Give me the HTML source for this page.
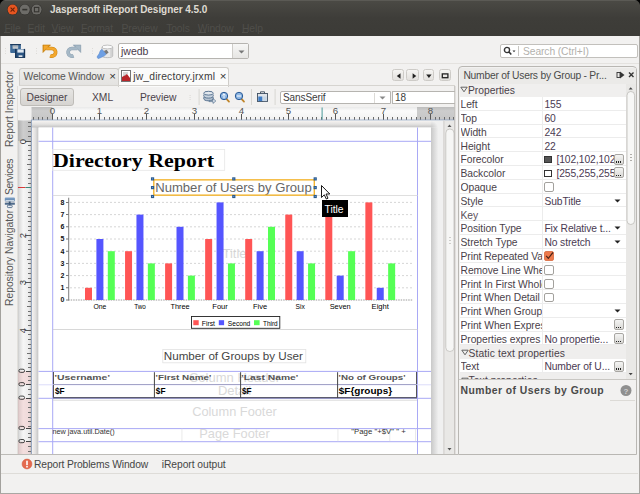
<!DOCTYPE html>
<html><head><meta charset="utf-8">
<style>
*{box-sizing:border-box;margin:0;padding:0}
html,body{width:640px;height:494px;overflow:hidden;background:#f2f1f0;font-family:"Liberation Sans",sans-serif;position:relative}
.a{position:absolute}
.t{position:absolute;white-space:nowrap;line-height:1}
svg{position:absolute;overflow:visible}
</style></head><body>

<div class="a" style="left:0px;top:0px;width:640px;height:36px;background:linear-gradient(#4b4a45,#3e3d39 18px,#3c3b37);"></div>
<div class="a" style="left:0px;top:0px;width:640px;height:1px;background:#5b5a55;"></div>
<svg style="left:634px;top:0" width="6" height="6"><path d="M6 0 H1 Q5.2 0.8 6 5 Z" fill="#000"/></svg>
<svg style="left:0;top:0" width="60" height="20" viewBox="0 0 60 20"><path d="M0 0 H5 Q0.8 0.8 0 5 Z" fill="#000"/><circle cx="12.6" cy="9.6" r="5.6" fill="#2f2e2b"/><circle cx="12.6" cy="9.6" r="5" fill="#e65520"/><path d="M10.6 7.6 L14.6 11.6 M14.6 7.6 L10.6 11.6" stroke="#6b2208" stroke-width="1.1"/><circle cx="24.8" cy="9.6" r="5.6" fill="#2f2e2b"/><circle cx="24.8" cy="9.6" r="5" fill="#6d6c68"/><rect x="22.3" y="8.8" width="5" height="1.6" fill="#34332f"/><circle cx="36.6" cy="9.6" r="5.6" fill="#2f2e2b"/><circle cx="36.6" cy="9.6" r="5" fill="#6d6c68"/><rect x="34.4" y="7.4" width="4.4" height="4.4" fill="none" stroke="#34332f" stroke-width="1.1"/></svg>
<div class="t" style="left:50px;top:5px;font-size:10px;color:#dfdbd2;font-weight:bold;letter-spacing:-0.05px;">Jaspersoft iReport Designer 4.5.0</div>
<div class="t" style="left:4.4px;top:23.5px;font-size:10.3px;color:#4f4e4a;font-weight:normal;letter-spacing:-0.1px;">File</div>
<div class="a" style="left:4.4px;top:32px;width:6px;height:1px;background:#4f4e4a;"></div>
<div class="t" style="left:27.6px;top:23.5px;font-size:10.3px;color:#4f4e4a;font-weight:normal;letter-spacing:-0.1px;">Edit</div>
<div class="a" style="left:27.6px;top:32px;width:6px;height:1px;background:#4f4e4a;"></div>
<div class="t" style="left:51.6px;top:23.5px;font-size:10.3px;color:#4f4e4a;font-weight:normal;letter-spacing:-0.1px;">View</div>
<div class="a" style="left:51.6px;top:32px;width:6px;height:1px;background:#4f4e4a;"></div>
<div class="t" style="left:81px;top:23.5px;font-size:10.3px;color:#4f4e4a;font-weight:normal;letter-spacing:-0.1px;">Format</div>
<div class="a" style="left:81px;top:32px;width:6px;height:1px;background:#4f4e4a;"></div>
<div class="t" style="left:121.6px;top:23.5px;font-size:10.3px;color:#4f4e4a;font-weight:normal;letter-spacing:-0.1px;">Preview</div>
<div class="a" style="left:121.6px;top:32px;width:6px;height:1px;background:#4f4e4a;"></div>
<div class="t" style="left:166.2px;top:23.5px;font-size:10.3px;color:#4f4e4a;font-weight:normal;letter-spacing:-0.1px;">Tools</div>
<div class="a" style="left:166.2px;top:32px;width:6px;height:1px;background:#4f4e4a;"></div>
<div class="t" style="left:197.7px;top:23.5px;font-size:10.3px;color:#4f4e4a;font-weight:normal;letter-spacing:-0.1px;">Window</div>
<div class="a" style="left:197.7px;top:32px;width:8px;height:1px;background:#4f4e4a;"></div>
<div class="t" style="left:242px;top:23.5px;font-size:10.3px;color:#4f4e4a;font-weight:normal;letter-spacing:-0.1px;">Help</div>
<div class="a" style="left:242px;top:32px;width:6px;height:1px;background:#4f4e4a;"></div>
<div class="a" style="left:0px;top:36px;width:1px;height:458px;background:#a3a19d;"></div>
<div class="a" style="left:1px;top:63px;width:639px;height:1px;background:#e4e2df;"></div>
<svg style="left:0;top:36px" width="130" height="28" viewBox="0 36 130 28">
  <g fill="#dddbd7"><rect x="5" y="48" width="1" height="1"/><rect x="5" y="50.5" width="1" height="1"/><rect x="5" y="53" width="1" height="1"/>
  <rect x="36" y="48" width="1" height="1"/><rect x="36" y="50.5" width="1" height="1"/><rect x="36" y="53" width="1" height="1"/>
  <rect x="92" y="48" width="1" height="1"/><rect x="92" y="50.5" width="1" height="1"/><rect x="92" y="53" width="1" height="1"/></g>
  <rect x="10.2" y="44" width="10.7" height="9" rx="1" fill="#3d6a98"/>
  <rect x="10.2" y="44" width="10.7" height="1.2" fill="#1b3a5e"/>
  <rect x="12.6" y="45.5" width="5.6" height="3.3" fill="#c2c8ce"/>
  <rect x="12.6" y="45.5" width="5.6" height="1" fill="#9aa3ab"/>
  <rect x="15.1" y="48.9" width="10" height="8.9" rx="1" fill="#2b5583"/>
  <rect x="15.1" y="48.9" width="1.2" height="8.9" fill="#173456"/>
  <rect x="23.9" y="48.9" width="1.2" height="8.9" fill="#173456"/>
  <rect x="15.1" y="56.8" width="10" height="1" fill="#173456"/>
  <rect x="17.4" y="49.4" width="6.3" height="3.2" fill="#dfe8f1"/>
  <rect x="18.6" y="55.4" width="3.8" height="1.5" fill="#f2f4f6"/>
  <g>
  <path d="M46.3 48.5 L51.8 48.5 A3.8 3.8 0 1 1 50.2 55.74" fill="none" stroke="#c9820f" stroke-width="3.7"/>
  <path d="M42.9 44.9 L50.6 44.9 L42.9 52.6 Z" fill="#c9820f" stroke="#c9820f" stroke-width="0.5" stroke-linejoin="round"/>
  <path d="M46.3 48.5 L51.8 48.5 A3.8 3.8 0 1 1 50.2 55.74" fill="none" stroke="#f4a82e" stroke-width="2.6"/>
  <path d="M43.6 45.6 L49 45.6 L43.6 51 Z" fill="#f4a82e"/>
  </g>
  <g>
  <path d="M77.4 48.5 L71.9 48.5 A3.8 3.8 0 1 0 73.5 55.74" fill="none" stroke="#8fa3b3" stroke-width="3.7"/>
  <path d="M80.8 44.9 L73.1 44.9 L80.8 52.6 Z" fill="#8fa3b3" stroke="#8fa3b3" stroke-width="0.5" stroke-linejoin="round"/>
  <path d="M77.4 48.5 L71.9 48.5 A3.8 3.8 0 1 0 73.5 55.74" fill="none" stroke="#a6b8c6" stroke-width="2.6"/>
  <path d="M80.1 45.6 L74.7 45.6 L80.1 51 Z" fill="#a6b8c6"/>
  </g>
  <path d="M102 47 L102 56 C102 58.2 112.7 58.2 112.7 56 L112.7 47 Z" fill="#e9e9e9" stroke="#a9a9a9" stroke-width="0.7"/>
  <path d="M110.2 48.5 L110.2 56.8 C111.3 56.6 112 56.3 112 56 L112 48Z" fill="#d2d2d2"/>
  <ellipse cx="107.35" cy="47" rx="5.35" ry="1.9" fill="#fbfbfb" stroke="#a9a9a9" stroke-width="0.7"/>
  <path d="M97 57 C97.5 55.5 98.6 55 99.2 53.6 C99.8 51.6 100.5 49.8 101.8 49.4 L106.6 53.6 C105.8 55.2 104 56.4 102 57 C100.6 57.6 99.4 58.4 98 58.6 Z" fill="#6e9fe3" stroke="#4f80c8" stroke-width="0.5"/>
  <path d="M103.8 51 L106.6 49.8 L108.6 52.6 L106.4 54.2 Z" fill="#7a7a7a"/>
</svg>
<div class="a" style="left:118px;top:43px;width:131px;height:16px;background:#fff;border:1px solid #b6b4b0;border-radius:2px"></div>
<div class="a" style="left:233px;top:44px;width:15px;height:14px;background:linear-gradient(#f7f7f6,#e6e5e3);"></div>
<div class="a" style="left:232px;top:44px;width:1px;height:14px;background:#cfcdc9;"></div>
<div class="t" style="left:121px;top:46px;font-size:10.5px;color:#4a3a4a;font-weight:normal;letter-spacing:0px;">jwedb</div>
<svg style="left:237.7px;top:49.5px" width="7" height="4"><path d="M0.5 0.5 H6.5 L3.5 3.5Z" fill="#777"/></svg>
<div class="a" style="left:500px;top:44px;width:138px;height:14px;background:#fff;border:1px solid #c2c0bc;border-radius:2px"></div>
<svg style="left:503px;top:46px" width="14" height="10"><circle cx="4" cy="4" r="2.6" fill="none" stroke="#333" stroke-width="1.4"/><path d="M6 6 L8.3 8.5" stroke="#333" stroke-width="1.6"/><path d="M9.5 4.5 H12.5 L11 6.2Z" fill="#333"/></svg>
<div class="a" style="left:518px;top:46px;width:1px;height:10px;background:#c8c6c2;"></div>
<div class="t" style="left:523px;top:46.5px;font-size:10.3px;color:#b3b1ad;font-weight:normal;letter-spacing:-0.1px;">Search (Ctrl+I)</div>
<div class="a" style="left:17.3px;top:86px;width:0.8px;height:369px;background:#e2e0dc;"></div>
<div class="t" style="left:9.9px;top:146.5px;font-size:10.3px;color:#575757;transform-origin:0 0;transform:rotate(-90deg) translate(0,-5.5px)">Report Inspector</div>
<div class="t" style="left:9.9px;top:195.3px;font-size:10.3px;color:#575757;letter-spacing:-0.45px;transform-origin:0 0;transform:rotate(-90deg) translate(0,-5.5px)">Services</div>
<div class="t" style="left:9.9px;top:305.8px;font-size:10.3px;color:#575757;transform-origin:0 0;transform:rotate(-90deg) translate(0,-5.5px)">Repository Navigator</div>
<svg style="left:0;top:190px" width="20" height="20" viewBox="0 190 20 20"><defs><linearGradient id="svg1" x1="0" y1="0" x2="0" y2="1"><stop offset="0" stop-color="#7fa2c8"/><stop offset="1" stop-color="#5b7fa8"/></linearGradient></defs><rect x="4.8" y="197.6" width="10.1" height="3.9" rx="0.8" fill="url(#svg1)"/><rect x="5.5" y="200" width="8.7" height="0.9" fill="#d5e0ea"/><rect x="4.8" y="201.6" width="10.1" height="1.1" fill="#c5c9cd"/><rect x="4.8" y="202.8" width="10.1" height="2" rx="0.6" fill="#4f6b8b"/><rect x="8.8" y="201.5" width="1.8" height="4" fill="#3d5674"/><rect x="7.4" y="205.2" width="4.8" height="2.4" rx="0.8" fill="#e8ecf0" stroke="#4f6b8b" stroke-width="0.9"/></svg>
<div class="a" style="left:19px;top:68px;width:100px;height:18px;background:linear-gradient(#eeedeb,#e3e2e0);border:1px solid #cfcdc9;border-bottom:none;border-radius:3px 3px 0 0"></div>
<div class="t" style="left:23.5px;top:71.5px;font-size:10.3px;color:#555555;font-weight:normal;letter-spacing:-0.1px;">Welcome Window</div>
<div class="t" style="left:109.3px;top:70.8px;font-size:11.5px;color:#333;font-weight:normal;letter-spacing:0px;">×</div>
<div class="a" style="left:118px;top:67px;width:111px;height:20px;background:#fbfbfa;border:1px solid #cfcdc9;border-bottom:none;border-radius:3px 3px 0 0"></div>
<svg style="left:120px;top:69px" width="12" height="14"><rect x="1.5" y="1.5" width="9" height="11" fill="#fff" stroke="#666" stroke-width="0.9"/><path d="M2 12 L2 8 L7 5 L10 9 L10 12Z" fill="#b8262a"/><path d="M3 4 H8 M3 6 H6" stroke="#999" stroke-width="0.8"/></svg>
<div class="t" style="left:133.3px;top:71.5px;font-size:10.3px;color:#3c3c3c;font-weight:normal;letter-spacing:0.17px;">jw_directory.jrxml</div>
<div class="t" style="left:219.8px;top:70.8px;font-size:11.5px;color:#333;font-weight:normal;letter-spacing:0px;">×</div>
<div class="a" style="left:392.3px;top:69px;width:11.8px;height:12.4px;background:linear-gradient(#f6f5f3,#e2e0dd);border:1px solid #cdcbc7;border-radius:2.5px"></div>
<div class="a" style="left:406.4px;top:69px;width:12.3px;height:12.4px;background:linear-gradient(#f6f5f3,#e2e0dd);border:1px solid #cdcbc7;border-radius:2.5px"></div>
<div class="a" style="left:423.2px;top:69px;width:11.3px;height:12.4px;background:linear-gradient(#f6f5f3,#e2e0dd);border:1px solid #cdcbc7;border-radius:2.5px"></div>
<div class="a" style="left:438.8px;top:69px;width:12.6px;height:12.4px;background:linear-gradient(#f6f5f3,#e2e0dd);border:1px solid #cdcbc7;border-radius:2.5px"></div>
<svg style="left:390px;top:68px" width="66" height="16"><path d="M10.5 5.2 L10.5 10.8 L6.8 8Z" fill="#222"/><path d="M22.6 5.2 L22.6 10.8 L26.3 8Z" fill="#222"/><path d="M36.2 6.4 H41.6 L38.9 10Z" fill="#222"/><rect x="52.3" y="5.9" width="5.6" height="3.8" fill="none" stroke="#222" stroke-width="1.3"/></svg>
<div class="a" style="left:19px;top:85.4px;width:436px;height:1px;background:#d6d4d0;"></div>
<div class="a" style="left:20px;top:87.5px;width:54px;height:18.5px;background:linear-gradient(#e6e5e3,#d6d4d1);border:1px solid #bebcb8;border-radius:3px"></div>
<div class="t" style="left:26.5px;top:92.5px;font-size:10.3px;color:#4a3f4a;font-weight:normal;letter-spacing:-0.05px;">Designer</div>
<div class="t" style="left:92px;top:92.5px;font-size:10.3px;color:#4a3f4a;font-weight:normal;letter-spacing:0px;">XML</div>
<div class="t" style="left:140px;top:92.5px;font-size:10.3px;color:#4a3f4a;font-weight:normal;letter-spacing:-0.05px;">Preview</div>
<svg style="left:185px;top:87px" width="100" height="20" viewBox="185 87 100 20">
  <g fill="#dedcd8"><rect x="189.5" y="95" width="1.2" height="1"/><rect x="189.5" y="97" width="1.2" height="1"/><rect x="189.5" y="99" width="1.2" height="1"/></g>
  <rect x="198.6" y="89" width="1" height="16" fill="#d8d6d2"/>
  <rect x="251" y="89" width="1" height="16" fill="#d8d6d2"/>
  <rect x="274.6" y="89" width="1" height="16" fill="#d8d6d2"/>
  <ellipse cx="208.5" cy="98.2" rx="4.8" ry="2.6" fill="#b7c4d2" stroke="#4f6b8a" stroke-width="0.9"/>
  <ellipse cx="208.5" cy="95.5" rx="4.8" ry="2.6" fill="#c9d4df" stroke="#4f6b8a" stroke-width="0.9"/>
  <ellipse cx="208.5" cy="93.2" rx="4.8" ry="1.9" fill="#e2e8ee" stroke="#4f6b8a" stroke-width="0.9"/>
  <path d="M209 100.4 H213 V98.6 L215.8 101 L213 103.4 V101.6 H209Z" fill="#dfe6ee" stroke="#4f6b8a" stroke-width="0.7"/>
  <path d="M226 98.4 L229 101.6" stroke="#c0852a" stroke-width="1.8" stroke-linecap="round"/>
  <circle cx="224" cy="96" r="3.7" fill="#8db6e3" stroke="#2a5a96" stroke-width="1"/>
  <path d="M224 93.8 V98.2 M222.4 95.4 L224 93.8 L225.6 95.4" stroke="#fff" stroke-width="0.9" fill="none"/>
  <path d="M241 98.4 L244 101.6" stroke="#c0852a" stroke-width="1.8" stroke-linecap="round"/>
  <circle cx="239" cy="96" r="3.7" fill="#8db6e3" stroke="#2a5a96" stroke-width="1"/>
  <path d="M237 96 H241" stroke="#fff" stroke-width="1"/>
  <rect x="257.5" y="93.5" width="10" height="8" fill="#dfe4ea" stroke="#3f4f60" stroke-width="0.9"/>
  <path d="M260.5 93.5 V91.8 H264.5 V93.5" fill="none" stroke="#3f4f60" stroke-width="0.9"/>
  <rect x="258.3" y="96.5" width="4" height="4.6" fill="#3d7cc6"/>
  <rect x="263.2" y="96.5" width="3.6" height="4.6" fill="#c8d6e4"/>
</svg>
<div class="a" style="left:280px;top:91.2px;width:111px;height:12.6px;background:#fff;border:1px solid #b6b4b0;border-radius:2px 0 0 2px"></div>
<div class="a" style="left:374px;top:92.5px;width:1px;height:10.5px;background:#dcdad6;"></div>
<div class="t" style="left:283px;top:93px;font-size:10px;color:#3c3c3c;font-weight:normal;letter-spacing:-0.1px;">SansSerif</div>
<svg style="left:379px;top:96px" width="7" height="4"><path d="M0.5 0.5 H6.5 L3.5 3.5Z" fill="#8a8a8a"/></svg>
<div class="a" style="left:392px;top:91.2px;width:63px;height:12.6px;background:#fff;border:1px solid #b6b4b0;border-right:none"></div>
<div class="t" style="left:395px;top:93px;font-size:10px;color:#3c3c3c;font-weight:normal;letter-spacing:0px;">18</div>
<svg style="left:0;top:0" width="640" height="494" viewBox="0 0 640 494">
<defs>
<linearGradient id="rh" x1="0" y1="0" x2="0" y2="1"><stop offset="0" stop-color="#e9e9e9"/><stop offset="0.3" stop-color="#fbfbfb"/><stop offset="1" stop-color="#f1f1f1"/></linearGradient>
<linearGradient id="rhg" x1="0" y1="0" x2="0" y2="1"><stop offset="0" stop-color="#bdbdbd"/><stop offset="0.3" stop-color="#cdcdcd"/><stop offset="1" stop-color="#c6c6c6"/></linearGradient>
<linearGradient id="rv" x1="0" y1="0" x2="1" y2="0"><stop offset="0" stop-color="#cbcbcb"/><stop offset="0.12" stop-color="#dedede"/><stop offset="0.4" stop-color="#f6f6f6"/><stop offset="0.8" stop-color="#ededed"/><stop offset="1" stop-color="#d9d9d9"/></linearGradient>
<linearGradient id="rvg" x1="0" y1="0" x2="1" y2="0"><stop offset="0" stop-color="#b0b0b0"/><stop offset="0.4" stop-color="#cdcdcd"/><stop offset="1" stop-color="#c2c2c2"/></linearGradient>
<linearGradient id="rvp" x1="0" y1="0" x2="1" y2="0"><stop offset="0" stop-color="#d2bfbf"/><stop offset="0.12" stop-color="#e3cfcf"/><stop offset="0.4" stop-color="#f3dede"/><stop offset="0.8" stop-color="#efdada"/><stop offset="1" stop-color="#dccaca"/></linearGradient>
<linearGradient id="shl" x1="0" y1="0" x2="1" y2="0"><stop offset="0" stop-color="#f5f2f0"/><stop offset="0.5" stop-color="#e3e2e1"/><stop offset="1" stop-color="#c2c2c2"/></linearGradient>
<linearGradient id="sht" x1="0" y1="0" x2="0" y2="1"><stop offset="0" stop-color="#f5f2f0"/><stop offset="0.5" stop-color="#e3e2e1"/><stop offset="1" stop-color="#c2c2c2"/></linearGradient>
<linearGradient id="shr" x1="0" y1="0" x2="1" y2="0"><stop offset="0" stop-color="#c8c8c8"/><stop offset="1" stop-color="#eeeeee"/></linearGradient>
<radialGradient id="shc" cx="0" cy="1" r="1"><stop offset="0" stop-color="#c6c6c6"/><stop offset="1" stop-color="#f0f0f0"/></radialGradient>
</defs>
<rect x="31.5" y="107" width="423" height="13" fill="url(#rh)"/>
<rect x="31.5" y="107" width="20.80" height="13" fill="url(#rhg)"/>
<rect x="417.0" y="107" width="37.50" height="13" fill="url(#rhg)"/>
<rect x="33" y="117" width="1" height="3" fill="#6a6a6a"/>
<rect x="38" y="117" width="1" height="3" fill="#6a6a6a"/>
<rect x="42" y="117" width="1" height="3" fill="#6a6a6a"/>
<rect x="47" y="117" width="1" height="3" fill="#6a6a6a"/>
<rect x="52" y="114" width="1" height="6" fill="#555"/>
<text x="52.5" y="113.9" font-size="9.7" text-anchor="middle" fill="#555" font-family="Liberation Sans">0</text>
<rect x="57" y="117" width="1" height="3" fill="#6a6a6a"/>
<rect x="61" y="117" width="1" height="3" fill="#6a6a6a"/>
<rect x="66" y="117" width="1" height="3" fill="#6a6a6a"/>
<rect x="71" y="117" width="1" height="3" fill="#6a6a6a"/>
<rect x="75" y="117" width="1" height="3" fill="#6a6a6a"/>
<rect x="80" y="117" width="1" height="3" fill="#6a6a6a"/>
<rect x="85" y="117" width="1" height="3" fill="#6a6a6a"/>
<rect x="90" y="117" width="1" height="3" fill="#6a6a6a"/>
<rect x="94" y="117" width="1" height="3" fill="#6a6a6a"/>
<rect x="99" y="114" width="1" height="6" fill="#555"/>
<text x="99.5" y="113.9" font-size="9.7" text-anchor="middle" fill="#555" font-family="Liberation Sans">1</text>
<rect x="104" y="117" width="1" height="3" fill="#6a6a6a"/>
<rect x="109" y="117" width="1" height="3" fill="#6a6a6a"/>
<rect x="113" y="117" width="1" height="3" fill="#6a6a6a"/>
<rect x="118" y="117" width="1" height="3" fill="#6a6a6a"/>
<rect x="123" y="117" width="1" height="3" fill="#6a6a6a"/>
<rect x="127" y="117" width="1" height="3" fill="#6a6a6a"/>
<rect x="132" y="117" width="1" height="3" fill="#6a6a6a"/>
<rect x="137" y="117" width="1" height="3" fill="#6a6a6a"/>
<rect x="142" y="117" width="1" height="3" fill="#6a6a6a"/>
<rect x="146" y="114" width="1" height="6" fill="#555"/>
<text x="146.5" y="113.9" font-size="9.7" text-anchor="middle" fill="#555" font-family="Liberation Sans">2</text>
<rect x="151" y="117" width="1" height="3" fill="#6a6a6a"/>
<rect x="156" y="117" width="1" height="3" fill="#6a6a6a"/>
<rect x="160" y="117" width="1" height="3" fill="#6a6a6a"/>
<rect x="165" y="117" width="1" height="3" fill="#6a6a6a"/>
<rect x="170" y="117" width="1" height="3" fill="#6a6a6a"/>
<rect x="175" y="117" width="1" height="3" fill="#6a6a6a"/>
<rect x="179" y="117" width="1" height="3" fill="#6a6a6a"/>
<rect x="184" y="117" width="1" height="3" fill="#6a6a6a"/>
<rect x="189" y="117" width="1" height="3" fill="#6a6a6a"/>
<rect x="194" y="114" width="1" height="6" fill="#555"/>
<text x="194.5" y="113.9" font-size="9.7" text-anchor="middle" fill="#555" font-family="Liberation Sans">3</text>
<rect x="198" y="117" width="1" height="3" fill="#6a6a6a"/>
<rect x="203" y="117" width="1" height="3" fill="#6a6a6a"/>
<rect x="208" y="117" width="1" height="3" fill="#6a6a6a"/>
<rect x="212" y="117" width="1" height="3" fill="#6a6a6a"/>
<rect x="217" y="117" width="1" height="3" fill="#6a6a6a"/>
<rect x="222" y="117" width="1" height="3" fill="#6a6a6a"/>
<rect x="227" y="117" width="1" height="3" fill="#6a6a6a"/>
<rect x="231" y="117" width="1" height="3" fill="#6a6a6a"/>
<rect x="236" y="117" width="1" height="3" fill="#6a6a6a"/>
<rect x="241" y="114" width="1" height="6" fill="#555"/>
<text x="241.5" y="113.9" font-size="9.7" text-anchor="middle" fill="#555" font-family="Liberation Sans">4</text>
<rect x="246" y="117" width="1" height="3" fill="#6a6a6a"/>
<rect x="250" y="117" width="1" height="3" fill="#6a6a6a"/>
<rect x="255" y="117" width="1" height="3" fill="#6a6a6a"/>
<rect x="260" y="117" width="1" height="3" fill="#6a6a6a"/>
<rect x="264" y="117" width="1" height="3" fill="#6a6a6a"/>
<rect x="269" y="117" width="1" height="3" fill="#6a6a6a"/>
<rect x="274" y="117" width="1" height="3" fill="#6a6a6a"/>
<rect x="279" y="117" width="1" height="3" fill="#6a6a6a"/>
<rect x="283" y="117" width="1" height="3" fill="#6a6a6a"/>
<rect x="288" y="114" width="1" height="6" fill="#555"/>
<text x="288.5" y="113.9" font-size="9.7" text-anchor="middle" fill="#555" font-family="Liberation Sans">5</text>
<rect x="293" y="117" width="1" height="3" fill="#6a6a6a"/>
<rect x="298" y="117" width="1" height="3" fill="#6a6a6a"/>
<rect x="302" y="117" width="1" height="3" fill="#6a6a6a"/>
<rect x="307" y="117" width="1" height="3" fill="#6a6a6a"/>
<rect x="312" y="117" width="1" height="3" fill="#6a6a6a"/>
<rect x="316" y="117" width="1" height="3" fill="#6a6a6a"/>
<rect x="321" y="117" width="1" height="3" fill="#6a6a6a"/>
<rect x="326" y="117" width="1" height="3" fill="#6a6a6a"/>
<rect x="331" y="117" width="1" height="3" fill="#6a6a6a"/>
<rect x="335" y="114" width="1" height="6" fill="#555"/>
<text x="335.5" y="113.9" font-size="9.7" text-anchor="middle" fill="#555" font-family="Liberation Sans">6</text>
<rect x="340" y="117" width="1" height="3" fill="#6a6a6a"/>
<rect x="345" y="117" width="1" height="3" fill="#6a6a6a"/>
<rect x="349" y="117" width="1" height="3" fill="#6a6a6a"/>
<rect x="354" y="117" width="1" height="3" fill="#6a6a6a"/>
<rect x="359" y="117" width="1" height="3" fill="#6a6a6a"/>
<rect x="364" y="117" width="1" height="3" fill="#6a6a6a"/>
<rect x="368" y="117" width="1" height="3" fill="#6a6a6a"/>
<rect x="373" y="117" width="1" height="3" fill="#6a6a6a"/>
<rect x="378" y="117" width="1" height="3" fill="#6a6a6a"/>
<rect x="383" y="114" width="1" height="6" fill="#555"/>
<text x="383.5" y="113.9" font-size="9.7" text-anchor="middle" fill="#555" font-family="Liberation Sans">7</text>
<rect x="387" y="117" width="1" height="3" fill="#6a6a6a"/>
<rect x="392" y="117" width="1" height="3" fill="#6a6a6a"/>
<rect x="397" y="117" width="1" height="3" fill="#6a6a6a"/>
<rect x="401" y="117" width="1" height="3" fill="#6a6a6a"/>
<rect x="406" y="117" width="1" height="3" fill="#6a6a6a"/>
<rect x="411" y="117" width="1" height="3" fill="#6a6a6a"/>
<rect x="416" y="117" width="1" height="3" fill="#6a6a6a"/>
<rect x="420" y="117" width="1" height="3" fill="#6a6a6a"/>
<rect x="425" y="117" width="1" height="3" fill="#6a6a6a"/>
<rect x="430" y="114" width="1" height="6" fill="#555"/>
<text x="430.5" y="113.9" font-size="9.7" text-anchor="middle" fill="#555" font-family="Liberation Sans">8</text>
<rect x="435" y="117" width="1" height="3" fill="#6a6a6a"/>
<rect x="439" y="117" width="1" height="3" fill="#6a6a6a"/>
<rect x="444" y="117" width="1" height="3" fill="#6a6a6a"/>
<rect x="449" y="117" width="1" height="3" fill="#6a6a6a"/>
<rect x="453" y="117" width="1" height="3" fill="#6a6a6a"/>
<rect x="321.6" y="107.5" width="1" height="12.5" fill="#4a9a9a"/>
<rect x="31" y="119.6" width="424" height="1" fill="#8ea3c2"/>
<rect x="31.5" y="120.5" width="413" height="334" fill="#f0f0f0"/>
<rect x="32" y="121" width="6.5" height="334" fill="url(#shl)"/>
<rect x="32" y="121" width="399" height="6.5" fill="url(#sht)"/>
<rect x="431" y="127.5" width="7" height="327" fill="url(#shr)"/>
<rect x="431" y="121" width="7" height="6.5" fill="url(#shc)"/>
<rect x="31" y="120" width="1" height="335" fill="#8ea3c2"/>
<rect x="38.5" y="127.5" width="392.5" height="327" fill="#ffffff"/>
<rect x="18" y="120.5" width="13" height="334" fill="url(#rv)"/>
<rect x="18" y="120.5" width="13" height="20.5" fill="url(#rvg)"/>
<rect x="18" y="371.3" width="13" height="13.40" fill="url(#rvp)"/>
<rect x="18" y="398.2" width="13" height="30.30" fill="url(#rvp)"/>
<rect x="18" y="441.6" width="13" height="13.40" fill="url(#rvp)"/>
<rect x="30.6" y="120.5" width="0.6" height="334" fill="#b8b8b8"/>
<rect x="28" y="122" width="3" height="1" fill="#707070"/>
<rect x="28" y="126" width="3" height="1" fill="#707070"/>
<rect x="28" y="131" width="3" height="1" fill="#707070"/>
<rect x="28" y="136" width="3" height="1" fill="#707070"/>
<rect x="25" y="141" width="6" height="1" fill="#555"/>
<text transform="translate(26,141.5) rotate(-90)" font-size="9.5" text-anchor="middle" fill="#444" font-family="Liberation Sans">0</text>
<rect x="28" y="145" width="3" height="1" fill="#707070"/>
<rect x="28" y="150" width="3" height="1" fill="#707070"/>
<rect x="28" y="155" width="3" height="1" fill="#707070"/>
<rect x="28" y="159" width="3" height="1" fill="#707070"/>
<rect x="27" y="164" width="4" height="1" fill="#707070"/>
<rect x="28" y="169" width="3" height="1" fill="#707070"/>
<rect x="28" y="174" width="3" height="1" fill="#707070"/>
<rect x="28" y="178" width="3" height="1" fill="#707070"/>
<rect x="28" y="183" width="3" height="1" fill="#707070"/>
<rect x="28" y="192" width="3" height="1" fill="#707070"/>
<rect x="28" y="197" width="3" height="1" fill="#707070"/>
<rect x="28" y="202" width="3" height="1" fill="#707070"/>
<rect x="28" y="207" width="3" height="1" fill="#707070"/>
<rect x="27" y="211" width="4" height="1" fill="#707070"/>
<rect x="28" y="216" width="3" height="1" fill="#707070"/>
<rect x="28" y="221" width="3" height="1" fill="#707070"/>
<rect x="28" y="226" width="3" height="1" fill="#707070"/>
<rect x="28" y="230" width="3" height="1" fill="#707070"/>
<rect x="25" y="235" width="6" height="1" fill="#555"/>
<text transform="translate(26,235.5) rotate(-90)" font-size="9.5" text-anchor="middle" fill="#444" font-family="Liberation Sans">2</text>
<rect x="28" y="240" width="3" height="1" fill="#707070"/>
<rect x="28" y="244" width="3" height="1" fill="#707070"/>
<rect x="28" y="249" width="3" height="1" fill="#707070"/>
<rect x="28" y="254" width="3" height="1" fill="#707070"/>
<rect x="27" y="259" width="4" height="1" fill="#707070"/>
<rect x="28" y="263" width="3" height="1" fill="#707070"/>
<rect x="28" y="268" width="3" height="1" fill="#707070"/>
<rect x="28" y="273" width="3" height="1" fill="#707070"/>
<rect x="28" y="278" width="3" height="1" fill="#707070"/>
<rect x="25" y="282" width="6" height="1" fill="#555"/>
<text transform="translate(26,282.5) rotate(-90)" font-size="9.5" text-anchor="middle" fill="#444" font-family="Liberation Sans">3</text>
<rect x="28" y="287" width="3" height="1" fill="#707070"/>
<rect x="28" y="292" width="3" height="1" fill="#707070"/>
<rect x="28" y="296" width="3" height="1" fill="#707070"/>
<rect x="28" y="301" width="3" height="1" fill="#707070"/>
<rect x="27" y="306" width="4" height="1" fill="#707070"/>
<rect x="28" y="311" width="3" height="1" fill="#707070"/>
<rect x="28" y="315" width="3" height="1" fill="#707070"/>
<rect x="28" y="320" width="3" height="1" fill="#707070"/>
<rect x="28" y="325" width="3" height="1" fill="#707070"/>
<rect x="25" y="330" width="6" height="1" fill="#555"/>
<text transform="translate(26,330.5) rotate(-90)" font-size="9.5" text-anchor="middle" fill="#444" font-family="Liberation Sans">4</text>
<rect x="28" y="334" width="3" height="1" fill="#707070"/>
<rect x="28" y="339" width="3" height="1" fill="#707070"/>
<rect x="28" y="344" width="3" height="1" fill="#707070"/>
<rect x="28" y="348" width="3" height="1" fill="#707070"/>
<rect x="27" y="353" width="4" height="1" fill="#707070"/>
<rect x="28" y="358" width="3" height="1" fill="#707070"/>
<rect x="28" y="363" width="3" height="1" fill="#707070"/>
<rect x="28" y="367" width="3" height="1" fill="#707070"/>
<rect x="26" y="371" width="5" height="1" fill="#444"/>
<rect x="18.9" y="369.20" width="5.6" height="3.2" rx="1.5" fill="none" stroke="#333" stroke-width="0.9"/>
<rect x="26" y="384" width="5" height="1" fill="#444"/>
<rect x="18.9" y="382.60" width="5.6" height="3.2" rx="1.5" fill="none" stroke="#333" stroke-width="0.9"/>
<rect x="26" y="398" width="5" height="1" fill="#444"/>
<rect x="18.9" y="396.10" width="5.6" height="3.2" rx="1.5" fill="none" stroke="#333" stroke-width="0.9"/>
<rect x="26" y="428" width="5" height="1" fill="#444"/>
<rect x="18.9" y="426.40" width="5.6" height="3.2" rx="1.5" fill="none" stroke="#333" stroke-width="0.9"/>
<rect x="26" y="441" width="5" height="1" fill="#444"/>
<rect x="18.9" y="439.50" width="5.6" height="3.2" rx="1.5" fill="none" stroke="#333" stroke-width="0.9"/>
<rect x="28" y="376" width="3" height="1" fill="#707070"/>
<rect x="28" y="380" width="3" height="1" fill="#707070"/>
<rect x="28" y="389" width="3" height="1" fill="#707070"/>
<rect x="28" y="394" width="3" height="1" fill="#707070"/>
<rect x="28" y="402" width="3" height="1" fill="#707070"/>
<rect x="28" y="407" width="3" height="1" fill="#707070"/>
<rect x="28" y="412" width="3" height="1" fill="#707070"/>
<rect x="28" y="417" width="3" height="1" fill="#707070"/>
<rect x="28" y="421" width="3" height="1" fill="#707070"/>
<rect x="28" y="426" width="3" height="1" fill="#707070"/>
<rect x="28" y="433" width="3" height="1" fill="#707070"/>
<rect x="28" y="437" width="3" height="1" fill="#707070"/>
<rect x="28" y="446" width="3" height="1" fill="#707070"/>
<rect x="28" y="451" width="3" height="1" fill="#707070"/>
<rect x="18" y="187" width="7.5" height="1" fill="#d83a3a"/><rect x="25.5" y="187" width="5.5" height="1" fill="#3a8a7a"/>
<rect x="52.2" y="127.5" width="1" height="327" fill="#a9a9f5"/>
<rect x="417" y="127.5" width="1" height="327" fill="#a9a9f5"/>
<rect x="38.5" y="140.8" width="392.5" height="1" fill="#a9a9f5"/>
<rect x="38.5" y="370.9" width="392.5" height="1" fill="#a9a9f5"/>
<rect x="38.5" y="397.8" width="392.5" height="1" fill="#a9a9f5"/>
<rect x="38.5" y="428.1" width="392.5" height="1" fill="#a9a9f5"/>
<rect x="38.5" y="441.2" width="392.5" height="1" fill="#a9a9f5"/>
<rect x="38.5" y="384.3" width="392.5" height="1" fill="#dcdcfa"/>
<text x="234.5" y="258.18" font-size="13" text-anchor="middle" fill="#d9d9d9" font-family="Liberation Sans">Title</text>
<text x="234.5" y="382.18" font-size="13" text-anchor="middle" fill="#d9d9d9" font-family="Liberation Sans">Column Header</text>
<text x="234.5" y="395.18" font-size="13" text-anchor="middle" fill="#d9d9d9" font-family="Liberation Sans">Detail</text>
<text x="234.5" y="416.11" font-size="12.8" text-anchor="middle" fill="#d9d9d9" font-family="Liberation Sans">Column Footer</text>
<text x="234.5" y="437.61" font-size="12.8" text-anchor="middle" fill="#d9d9d9" font-family="Liberation Sans">Page Footer</text>
<rect x="52.7" y="195" width="365" height="0.8" fill="#d8d8d8"/>
<rect x="53" y="329.2" width="364.5" height="0.8" fill="#cfcfcf"/>
<rect x="53" y="399.8" width="364" height="0.8" fill="#d4d4d4"/>
<rect x="52.7" y="149.5" width="172" height="20.8" fill="none" stroke="#e6e6e6" stroke-width="0.8"/>
<text x="53" y="166.7" font-size="19" font-weight="bold" textLength="161" lengthAdjust="spacingAndGlyphs" fill="#000" font-family="Liberation Serif">Directory Report</text>
<rect x="68.2" y="197.7" width="1" height="102.8" fill="#7d7d7d"/>
<line x1="68.2" y1="300" x2="412.5" y2="300" stroke="#9a9a9a" stroke-width="1" stroke-dasharray="1.5,1"/>
<rect x="66" y="299.60" width="2.5" height="0.8" fill="#555"/>
<text x="64.5" y="302.40" font-size="7" font-weight="bold" text-anchor="end" fill="#111" font-family="Liberation Sans">0</text>
<line x1="70" y1="287.80" x2="412.5" y2="287.80" stroke="#cbcbcb" stroke-width="0.8" stroke-dasharray="2,2"/>
<rect x="66" y="287.40" width="2.5" height="0.8" fill="#555"/>
<text x="64.5" y="290.20" font-size="7" font-weight="bold" text-anchor="end" fill="#111" font-family="Liberation Sans">1</text>
<line x1="70" y1="275.60" x2="412.5" y2="275.60" stroke="#cbcbcb" stroke-width="0.8" stroke-dasharray="2,2"/>
<rect x="66" y="275.20" width="2.5" height="0.8" fill="#555"/>
<text x="64.5" y="278.00" font-size="7" font-weight="bold" text-anchor="end" fill="#111" font-family="Liberation Sans">2</text>
<line x1="70" y1="263.40" x2="412.5" y2="263.40" stroke="#cbcbcb" stroke-width="0.8" stroke-dasharray="2,2"/>
<rect x="66" y="263.00" width="2.5" height="0.8" fill="#555"/>
<text x="64.5" y="265.80" font-size="7" font-weight="bold" text-anchor="end" fill="#111" font-family="Liberation Sans">3</text>
<line x1="70" y1="251.20" x2="412.5" y2="251.20" stroke="#cbcbcb" stroke-width="0.8" stroke-dasharray="2,2"/>
<rect x="66" y="250.80" width="2.5" height="0.8" fill="#555"/>
<text x="64.5" y="253.60" font-size="7" font-weight="bold" text-anchor="end" fill="#111" font-family="Liberation Sans">4</text>
<line x1="70" y1="239.00" x2="412.5" y2="239.00" stroke="#cbcbcb" stroke-width="0.8" stroke-dasharray="2,2"/>
<rect x="66" y="238.60" width="2.5" height="0.8" fill="#555"/>
<text x="64.5" y="241.40" font-size="7" font-weight="bold" text-anchor="end" fill="#111" font-family="Liberation Sans">5</text>
<line x1="70" y1="226.80" x2="412.5" y2="226.80" stroke="#cbcbcb" stroke-width="0.8" stroke-dasharray="2,2"/>
<rect x="66" y="226.40" width="2.5" height="0.8" fill="#555"/>
<text x="64.5" y="229.20" font-size="7" font-weight="bold" text-anchor="end" fill="#111" font-family="Liberation Sans">6</text>
<line x1="70" y1="214.60" x2="412.5" y2="214.60" stroke="#cbcbcb" stroke-width="0.8" stroke-dasharray="2,2"/>
<rect x="66" y="214.20" width="2.5" height="0.8" fill="#555"/>
<text x="64.5" y="217.00" font-size="7" font-weight="bold" text-anchor="end" fill="#111" font-family="Liberation Sans">7</text>
<line x1="70" y1="202.40" x2="412.5" y2="202.40" stroke="#cbcbcb" stroke-width="0.8" stroke-dasharray="2,2"/>
<rect x="66" y="202.00" width="2.5" height="0.8" fill="#555"/>
<text x="64.5" y="204.80" font-size="7" font-weight="bold" text-anchor="end" fill="#111" font-family="Liberation Sans">8</text>
<rect x="85.00" y="287.80" width="7" height="12.20" fill="#ff5555"/>
<rect x="96.40" y="239.00" width="7" height="61.00" fill="#5555ff"/>
<rect x="107.80" y="251.20" width="7" height="48.80" fill="#55ff55"/>
<text x="93.45" y="309" font-size="6.9" textLength="12.9" lengthAdjust="spacingAndGlyphs" fill="#000" font-family="Liberation Sans">One</text>
<rect x="125.05" y="251.20" width="7" height="48.80" fill="#ff5555"/>
<rect x="136.45" y="214.60" width="7" height="85.40" fill="#5555ff"/>
<rect x="147.85" y="263.40" width="7" height="36.60" fill="#55ff55"/>
<text x="134.15" y="309" font-size="6.9" textLength="11.6" lengthAdjust="spacingAndGlyphs" fill="#000" font-family="Liberation Sans">Two</text>
<rect x="165.10" y="263.40" width="7" height="36.60" fill="#ff5555"/>
<rect x="176.50" y="226.80" width="7" height="73.20" fill="#5555ff"/>
<rect x="187.90" y="275.60" width="7" height="24.40" fill="#55ff55"/>
<text x="170.40" y="309" font-size="6.9" textLength="19.2" lengthAdjust="spacingAndGlyphs" fill="#000" font-family="Liberation Sans">Three</text>
<rect x="205.15" y="239.00" width="7" height="61.00" fill="#ff5555"/>
<rect x="216.55" y="202.40" width="7" height="97.60" fill="#5555ff"/>
<rect x="227.95" y="263.40" width="7" height="36.60" fill="#55ff55"/>
<text x="212.30" y="309" font-size="6.9" textLength="15.5" lengthAdjust="spacingAndGlyphs" fill="#000" font-family="Liberation Sans">Four</text>
<rect x="245.20" y="239.00" width="7" height="61.00" fill="#ff5555"/>
<rect x="256.60" y="251.20" width="7" height="48.80" fill="#5555ff"/>
<rect x="268.00" y="226.80" width="7" height="73.20" fill="#55ff55"/>
<text x="253.05" y="309" font-size="6.9" textLength="14.1" lengthAdjust="spacingAndGlyphs" fill="#000" font-family="Liberation Sans">Five</text>
<rect x="285.25" y="214.60" width="7" height="85.40" fill="#ff5555"/>
<rect x="296.65" y="251.20" width="7" height="48.80" fill="#5555ff"/>
<rect x="308.05" y="263.40" width="7" height="36.60" fill="#55ff55"/>
<text x="295.50" y="309" font-size="6.9" textLength="9.3" lengthAdjust="spacingAndGlyphs" fill="#000" font-family="Liberation Sans">Six</text>
<rect x="325.30" y="214.60" width="7" height="85.40" fill="#ff5555"/>
<rect x="336.70" y="275.60" width="7" height="24.40" fill="#5555ff"/>
<rect x="348.10" y="251.20" width="7" height="48.80" fill="#55ff55"/>
<text x="329.65" y="309" font-size="6.9" textLength="21.1" lengthAdjust="spacingAndGlyphs" fill="#000" font-family="Liberation Sans">Seven</text>
<rect x="365.35" y="202.40" width="7" height="97.60" fill="#ff5555"/>
<rect x="376.75" y="287.80" width="7" height="12.20" fill="#5555ff"/>
<rect x="388.15" y="263.40" width="7" height="36.60" fill="#55ff55"/>
<text x="371.60" y="309" font-size="6.9" textLength="17.3" lengthAdjust="spacingAndGlyphs" fill="#000" font-family="Liberation Sans">Eight</text>
<rect x="191.5" y="316.5" width="88.3" height="11.8" fill="#fff" stroke="#222" stroke-width="0.9"/>
<rect x="193.3" y="320.2" width="5.4" height="5" fill="#ff5555"/>
<text x="201.8" y="325.5" font-size="6.8" textLength="13.2" lengthAdjust="spacingAndGlyphs" fill="#000" font-family="Liberation Sans">First</text>
<rect x="218.8" y="320.2" width="5.3" height="5" fill="#5555ff"/>
<text x="227.8" y="325.5" font-size="6.8" textLength="22.5" lengthAdjust="spacingAndGlyphs" fill="#000" font-family="Liberation Sans">Second</text>
<rect x="254" y="320.2" width="5.6" height="5" fill="#55ff55"/>
<text x="263" y="325.5" font-size="6.8" textLength="14.7" lengthAdjust="spacingAndGlyphs" fill="#000" font-family="Liberation Sans">Third</text>
<text x="155.2" y="191.7" font-size="11.9" textLength="156.5" lengthAdjust="spacingAndGlyphs" fill="#666666" font-family="Liberation Sans">Number of Users by Group</text>
<rect x="153.8" y="179.85" width="160.5" height="15.3" fill="none" stroke="#f4b52e" stroke-width="1.4"/>
<rect x="150.95" y="177.30" width="3.2" height="3.2" fill="#2a5a90"/>
<rect x="152.05" y="178.40" width="1" height="1" fill="#7aa6d0"/>
<rect x="150.95" y="186.00" width="3.2" height="3.2" fill="#2a5a90"/>
<rect x="152.05" y="187.10" width="1" height="1" fill="#7aa6d0"/>
<rect x="150.95" y="194.90" width="3.2" height="3.2" fill="#2a5a90"/>
<rect x="152.05" y="196.00" width="1" height="1" fill="#7aa6d0"/>
<rect x="232.20" y="177.30" width="3.2" height="3.2" fill="#2a5a90"/>
<rect x="233.30" y="178.40" width="1" height="1" fill="#7aa6d0"/>
<rect x="232.20" y="194.90" width="3.2" height="3.2" fill="#2a5a90"/>
<rect x="233.30" y="196.00" width="1" height="1" fill="#7aa6d0"/>
<rect x="313.60" y="177.30" width="3.2" height="3.2" fill="#2a5a90"/>
<rect x="314.70" y="178.40" width="1" height="1" fill="#7aa6d0"/>
<rect x="313.60" y="186.00" width="3.2" height="3.2" fill="#2a5a90"/>
<rect x="314.70" y="187.10" width="1" height="1" fill="#7aa6d0"/>
<rect x="313.60" y="194.90" width="3.2" height="3.2" fill="#2a5a90"/>
<rect x="314.70" y="196.00" width="1" height="1" fill="#7aa6d0"/>
<rect x="162.8" y="349.4" width="143" height="13.4" fill="none" stroke="#e2e2e2" stroke-width="0.8"/>
<text x="163.8" y="360" font-size="11.8" textLength="139" lengthAdjust="spacingAndGlyphs" fill="#444" font-family="Liberation Sans">Number of Groups by User</text>
<rect x="53" y="372" width="1" height="26" fill="#555"/>
<rect x="416" y="372" width="1" height="26" fill="#555"/>
<rect x="53" y="397" width="364" height="1.4" fill="#5c5c6e"/>
<rect x="53" y="384" width="364" height="1" fill="#a4a4c8"/>
<rect x="153.90" y="372.2" width="1" height="25.8" fill="#444"/>
<rect x="240.10" y="372.2" width="1" height="25.8" fill="#444"/>
<rect x="337.10" y="372.2" width="1" height="25.8" fill="#444"/>
<text x="54.6" y="380.3" font-size="8" font-weight="bold" textLength="55.3" lengthAdjust="spacingAndGlyphs" fill="#555" font-family="Liberation Sans">&#39;Username&#39;</text>
<text x="155.6" y="380.3" font-size="8" font-weight="bold" textLength="55.7" lengthAdjust="spacingAndGlyphs" fill="#555" font-family="Liberation Sans">&#39;First Name&#39;</text>
<text x="241.3" y="380.3" font-size="8" font-weight="bold" textLength="57" lengthAdjust="spacingAndGlyphs" fill="#555" font-family="Liberation Sans">&#39;Last Name&#39;</text>
<text x="338.6" y="380.3" font-size="8" font-weight="bold" textLength="67" lengthAdjust="spacingAndGlyphs" fill="#555" font-family="Liberation Sans">&#39;No of Groups&#39;</text>
<text x="55" y="393.8" font-size="8.4" font-weight="bold" textLength="9.7" lengthAdjust="spacingAndGlyphs" fill="#000" font-family="Liberation Sans">$F</text>
<text x="155.8" y="393.8" font-size="8.4" font-weight="bold" textLength="9.7" lengthAdjust="spacingAndGlyphs" fill="#000" font-family="Liberation Sans">$F</text>
<text x="242" y="393.8" font-size="8.4" font-weight="bold" textLength="9.7" lengthAdjust="spacingAndGlyphs" fill="#000" font-family="Liberation Sans">$F</text>
<text x="338.8" y="393.8" font-size="8.4" font-weight="bold" textLength="53.3" lengthAdjust="spacingAndGlyphs" fill="#000" font-family="Liberation Sans">$F{groups}</text>
<rect x="181.6" y="428.6" width="0.7" height="12.6" fill="#e0e0e0"/>
<rect x="337.6" y="428.6" width="0.7" height="12.6" fill="#e0e0e0"/>
<rect x="389.5" y="428.6" width="0.7" height="12.6" fill="#e0e0e0"/>
<rect x="415" y="428.6" width="0.7" height="12.6" fill="#e0e0e0"/>
<text x="52.4" y="434.4" font-size="6.3" textLength="62.3" lengthAdjust="spacingAndGlyphs" fill="#333" font-family="Liberation Sans">new java.util.Date()</text>
<text x="351.2" y="434.2" font-size="6.8" textLength="54.6" lengthAdjust="spacingAndGlyphs" fill="#333" font-family="Liberation Sans">"Page "+$V" " +</text>
<rect x="322" y="200" width="26" height="17" fill="#000"/>
<text x="324.5" y="212.5" font-size="10.3" fill="#fff" font-family="Liberation Sans">Title</text>
<path d="M321.5 185.5 L321.5 197.5 L324.3 194.8 L326.3 199 L328 198.2 L326 194 L329.8 194 Z" fill="#fff" stroke="#000" stroke-width="0.9" stroke-linejoin="round"/>
<rect x="444" y="120.5" width="11" height="334" fill="#e9e8e6"/>
<rect x="443.4" y="120.5" width="1" height="334" fill="#cdcbc7"/>
<path d="M447.5 127 L449.5 124.5 L451.5 127Z" fill="#555"/>
<rect x="445.8" y="129" width="8.2" height="222.5" rx="4" fill="#f6f6f5" stroke="#c2c0bc" stroke-width="0.8"/>
<g fill="#c4c2be"><rect x="449" y="237" width="2" height="0.8"/><rect x="449" y="240" width="2" height="0.8"/><rect x="449" y="243" width="2" height="0.8"/></g>
<path d="M447.5 448 L449.5 450.5 L451.5 448Z" fill="#555"/>
<rect x="454.3" y="86" width="1" height="369" fill="#b9b7b3"/>
</svg>
<div class="a" style="left:457.8px;top:66.2px;width:179.2px;height:388.8px;background:#f2f1f0;border:1px solid #b9b7b3;border-radius:4px 4px 0 0"></div>
<div class="a" style="left:459.5px;top:67.5px;width:176px;height:16px;background:#ebeae8;"></div>
<div class="t" style="left:463.4px;top:70.5px;font-size:10.3px;color:#4a4a4a;font-weight:normal;letter-spacing:-0.23px;">Number of Users by Group - Pr...</div>
<svg style="left:615px;top:70px" width="22" height="10"><rect x="2" y="2.5" width="3" height="5" fill="none" stroke="#333" stroke-width="0.9"/><path d="M5 1.5 L9.5 5 L5 8.5Z" fill="#333"/><path d="M14 2.5 L18.5 7 M18.5 2.5 L14 7" stroke="#333" stroke-width="1.4"/></svg>
<div class="a" style="left:459.5px;top:83.5px;width:166px;height:13.5px;background:#f0efee;"></div>
<svg style="left:460px;top:86px" width="8" height="8"><path d="M0.8 1.2 H7.2 L4 5.8Z" fill="none" stroke="#555" stroke-width="0.9"/></svg>
<div class="t" style="left:468px;top:86.2px;font-size:10.3px;color:#4a3f4a;font-weight:normal;letter-spacing:0px;">Properties</div>
<div class="a" style="left:459.5px;top:97px;width:166px;height:282px;overflow:hidden">
<div class="a" style="left:0;top:0.00px;width:166px;height:13.8px;background:#fff;border-bottom:1px solid #ececec"></div>
<div class="a" style="left:82.90px;top:0.00px;width:1px;height:13.8px;background:#ececec"></div>
<div class="a" style="left:1px;top:0.00px;width:81.40px;height:13.8px;overflow:hidden"><div class="t" style="left:0;top:3.2px;font-size:10.3px;color:#4a3f4a;letter-spacing:-0.05px">Left</div></div>
<div class="t" style="left:84.90px;top:3.20px;font-size:10.3px;color:#4a3a52;letter-spacing:-0.1px">155</div>
<div class="a" style="left:0;top:13.80px;width:166px;height:13.8px;background:#fff;border-bottom:1px solid #ececec"></div>
<div class="a" style="left:82.90px;top:13.80px;width:1px;height:13.8px;background:#ececec"></div>
<div class="a" style="left:1px;top:13.80px;width:81.40px;height:13.8px;overflow:hidden"><div class="t" style="left:0;top:3.2px;font-size:10.3px;color:#4a3f4a;letter-spacing:-0.05px">Top</div></div>
<div class="t" style="left:84.90px;top:17.00px;font-size:10.3px;color:#4a3a52;letter-spacing:-0.1px">60</div>
<div class="a" style="left:0;top:27.60px;width:166px;height:13.8px;background:#fff;border-bottom:1px solid #ececec"></div>
<div class="a" style="left:82.90px;top:27.60px;width:1px;height:13.8px;background:#ececec"></div>
<div class="a" style="left:1px;top:27.60px;width:81.40px;height:13.8px;overflow:hidden"><div class="t" style="left:0;top:3.2px;font-size:10.3px;color:#4a3f4a;letter-spacing:-0.05px">Width</div></div>
<div class="t" style="left:84.90px;top:30.80px;font-size:10.3px;color:#4a3a52;letter-spacing:-0.1px">242</div>
<div class="a" style="left:0;top:41.40px;width:166px;height:13.8px;background:#fff;border-bottom:1px solid #ececec"></div>
<div class="a" style="left:82.90px;top:41.40px;width:1px;height:13.8px;background:#ececec"></div>
<div class="a" style="left:1px;top:41.40px;width:81.40px;height:13.8px;overflow:hidden"><div class="t" style="left:0;top:3.2px;font-size:10.3px;color:#4a3f4a;letter-spacing:-0.05px">Height</div></div>
<div class="t" style="left:84.90px;top:44.60px;font-size:10.3px;color:#4a3a52;letter-spacing:-0.1px">22</div>
<div class="a" style="left:0;top:55.20px;width:166px;height:13.8px;background:#fff;border-bottom:1px solid #ececec"></div>
<div class="a" style="left:82.90px;top:55.20px;width:1px;height:13.8px;background:#ececec"></div>
<div class="a" style="left:1px;top:55.20px;width:81.40px;height:13.8px;overflow:hidden"><div class="t" style="left:0;top:3.2px;font-size:10.3px;color:#4a3f4a;letter-spacing:-0.05px">Forecolor</div></div>
<div class="a" style="left:84.90px;top:58.70px;width:7.5px;height:7.5px;background:#555;border:1px solid #333"></div>
<div class="t" style="left:96.90px;top:58.40px;font-size:10.3px;color:#4a3a52;letter-spacing:-0.1px">[102,102,102</div>
<div class="a" style="left:154.20px;top:56.60px;width:10.5px;height:11px;background:linear-gradient(#f4f4f3,#d9d8d5);border:1px solid #a8a6a2;border-radius:2px"></div>
<div class="a" style="left:156.70px;top:64.40px;width:1.2px;height:1.2px;background:#222"></div>
<div class="a" style="left:158.70px;top:64.40px;width:1.2px;height:1.2px;background:#222"></div>
<div class="a" style="left:160.70px;top:64.40px;width:1.2px;height:1.2px;background:#222"></div>
<div class="a" style="left:0;top:69.00px;width:166px;height:13.8px;background:#fff;border-bottom:1px solid #ececec"></div>
<div class="a" style="left:82.90px;top:69.00px;width:1px;height:13.8px;background:#ececec"></div>
<div class="a" style="left:1px;top:69.00px;width:81.40px;height:13.8px;overflow:hidden"><div class="t" style="left:0;top:3.2px;font-size:10.3px;color:#4a3f4a;letter-spacing:-0.05px">Backcolor</div></div>
<div class="a" style="left:84.90px;top:72.50px;width:7.5px;height:7.5px;background:#fff;border:1px solid #333"></div>
<div class="t" style="left:96.90px;top:72.20px;font-size:10.3px;color:#4a3a52;letter-spacing:-0.1px">[255,255,255</div>
<div class="a" style="left:154.20px;top:70.40px;width:10.5px;height:11px;background:linear-gradient(#f4f4f3,#d9d8d5);border:1px solid #a8a6a2;border-radius:2px"></div>
<div class="a" style="left:156.70px;top:78.20px;width:1.2px;height:1.2px;background:#222"></div>
<div class="a" style="left:158.70px;top:78.20px;width:1.2px;height:1.2px;background:#222"></div>
<div class="a" style="left:160.70px;top:78.20px;width:1.2px;height:1.2px;background:#222"></div>
<div class="a" style="left:0;top:82.80px;width:166px;height:13.8px;background:#fff;border-bottom:1px solid #ececec"></div>
<div class="a" style="left:82.90px;top:82.80px;width:1px;height:13.8px;background:#ececec"></div>
<div class="a" style="left:1px;top:82.80px;width:81.40px;height:13.8px;overflow:hidden"><div class="t" style="left:0;top:3.2px;font-size:10.3px;color:#4a3f4a;letter-spacing:-0.05px">Opaque</div></div>
<div class="a" style="left:84.90px;top:85.40px;width:9.5px;height:9.5px;background:#fff;border:1px solid #a3a19d;border-radius:2px"></div>
<div class="a" style="left:0;top:96.60px;width:166px;height:13.8px;background:#fff;border-bottom:1px solid #ececec"></div>
<div class="a" style="left:82.90px;top:96.60px;width:1px;height:13.8px;background:#ececec"></div>
<div class="a" style="left:1px;top:96.60px;width:81.40px;height:13.8px;overflow:hidden"><div class="t" style="left:0;top:3.2px;font-size:10.3px;color:#4a3f4a;letter-spacing:-0.05px">Style</div></div>
<div class="t" style="left:84.90px;top:99.80px;font-size:10.3px;color:#4a3a52;letter-spacing:-0.1px">SubTitle</div>
<svg style="left:154.50px;top:101.60px" width="8" height="5"><path d="M0.5 0.5 H6.5 L3.5 3.5Z" fill="#222"/></svg>
<div class="a" style="left:0;top:110.40px;width:166px;height:13.8px;background:#fff;border-bottom:1px solid #ececec"></div>
<div class="a" style="left:82.90px;top:110.40px;width:1px;height:13.8px;background:#ececec"></div>
<div class="a" style="left:1px;top:110.40px;width:81.40px;height:13.8px;overflow:hidden"><div class="t" style="left:0;top:3.2px;font-size:10.3px;color:#5a505a;letter-spacing:-0.05px">Key</div></div>
<div class="a" style="left:0;top:124.20px;width:166px;height:13.8px;background:#fff;border-bottom:1px solid #ececec"></div>
<div class="a" style="left:82.90px;top:124.20px;width:1px;height:13.8px;background:#ececec"></div>
<div class="a" style="left:1px;top:124.20px;width:81.40px;height:13.8px;overflow:hidden"><div class="t" style="left:0;top:3.2px;font-size:10.3px;color:#4a3f4a;letter-spacing:-0.05px">Position Type</div></div>
<div class="t" style="left:84.90px;top:127.40px;font-size:10.3px;color:#4a3a52;letter-spacing:-0.1px">Fix Relative t...</div>
<svg style="left:154.50px;top:129.20px" width="8" height="5"><path d="M0.5 0.5 H6.5 L3.5 3.5Z" fill="#222"/></svg>
<div class="a" style="left:0;top:138.00px;width:166px;height:13.8px;background:#fff;border-bottom:1px solid #ececec"></div>
<div class="a" style="left:82.90px;top:138.00px;width:1px;height:13.8px;background:#ececec"></div>
<div class="a" style="left:1px;top:138.00px;width:81.40px;height:13.8px;overflow:hidden"><div class="t" style="left:0;top:3.2px;font-size:10.3px;color:#4a3f4a;letter-spacing:-0.05px">Stretch Type</div></div>
<div class="t" style="left:84.90px;top:141.20px;font-size:10.3px;color:#4a3a52;letter-spacing:-0.1px">No stretch</div>
<svg style="left:154.50px;top:143.00px" width="8" height="5"><path d="M0.5 0.5 H6.5 L3.5 3.5Z" fill="#222"/></svg>
<div class="a" style="left:0;top:151.80px;width:166px;height:13.8px;background:#fff;border-bottom:1px solid #ececec"></div>
<div class="a" style="left:82.90px;top:151.80px;width:1px;height:13.8px;background:#ececec"></div>
<div class="a" style="left:1px;top:151.80px;width:81.40px;height:13.8px;overflow:hidden"><div class="t" style="left:0;top:3.2px;font-size:10.3px;color:#4a3f4a;letter-spacing:-0.05px">Print Repeated Va</div></div>
<svg style="left:84.90px;top:154.10px" width="10" height="10"><rect x="0.5" y="0.5" width="9" height="9" rx="1.5" fill="#ee7a4c" stroke="#d8683c" stroke-width="0.8"/><path d="M2.2 4.8 L4.3 7.3 L9 1.5" fill="none" stroke="#4a2418" stroke-width="1.2"/></svg>
<div class="a" style="left:0;top:165.60px;width:166px;height:13.8px;background:#fff;border-bottom:1px solid #ececec"></div>
<div class="a" style="left:82.90px;top:165.60px;width:1px;height:13.8px;background:#ececec"></div>
<div class="a" style="left:1px;top:165.60px;width:81.40px;height:13.8px;overflow:hidden"><div class="t" style="left:0;top:3.2px;font-size:10.3px;color:#4a3f4a;letter-spacing:-0.05px">Remove Line Wher</div></div>
<div class="a" style="left:84.90px;top:168.20px;width:9.5px;height:9.5px;background:#fff;border:1px solid #a3a19d;border-radius:2px"></div>
<div class="a" style="left:0;top:179.40px;width:166px;height:13.8px;background:#fff;border-bottom:1px solid #ececec"></div>
<div class="a" style="left:82.90px;top:179.40px;width:1px;height:13.8px;background:#ececec"></div>
<div class="a" style="left:1px;top:179.40px;width:81.40px;height:13.8px;overflow:hidden"><div class="t" style="left:0;top:3.2px;font-size:10.3px;color:#4a3f4a;letter-spacing:-0.05px">Print In First Whole</div></div>
<div class="a" style="left:84.90px;top:182.00px;width:9.5px;height:9.5px;background:#fff;border:1px solid #a3a19d;border-radius:2px"></div>
<div class="a" style="left:0;top:193.20px;width:166px;height:13.8px;background:#fff;border-bottom:1px solid #ececec"></div>
<div class="a" style="left:82.90px;top:193.20px;width:1px;height:13.8px;background:#ececec"></div>
<div class="a" style="left:1px;top:193.20px;width:81.40px;height:13.8px;overflow:hidden"><div class="t" style="left:0;top:3.2px;font-size:10.3px;color:#4a3f4a;letter-spacing:-0.05px">Print When Detail</div></div>
<div class="a" style="left:84.90px;top:195.80px;width:9.5px;height:9.5px;background:#fff;border:1px solid #a3a19d;border-radius:2px"></div>
<div class="a" style="left:0;top:207.00px;width:166px;height:13.8px;background:#fff;border-bottom:1px solid #ececec"></div>
<div class="a" style="left:82.90px;top:207.00px;width:1px;height:13.8px;background:#ececec"></div>
<div class="a" style="left:1px;top:207.00px;width:81.40px;height:13.8px;overflow:hidden"><div class="t" style="left:0;top:3.2px;font-size:10.3px;color:#4a3f4a;letter-spacing:-0.05px">Print When Group</div></div>
<svg style="left:154.50px;top:212.00px" width="8" height="5"><path d="M0.5 0.5 H6.5 L3.5 3.5Z" fill="#222"/></svg>
<div class="a" style="left:0;top:220.80px;width:166px;height:13.8px;background:#fff;border-bottom:1px solid #ececec"></div>
<div class="a" style="left:82.90px;top:220.80px;width:1px;height:13.8px;background:#ececec"></div>
<div class="a" style="left:1px;top:220.80px;width:81.40px;height:13.8px;overflow:hidden"><div class="t" style="left:0;top:3.2px;font-size:10.3px;color:#4a3f4a;letter-spacing:-0.05px">Print When Expres</div></div>
<div class="a" style="left:154.20px;top:222.20px;width:10.5px;height:11px;background:linear-gradient(#f4f4f3,#d9d8d5);border:1px solid #a8a6a2;border-radius:2px"></div>
<div class="a" style="left:156.70px;top:230.00px;width:1.2px;height:1.2px;background:#222"></div>
<div class="a" style="left:158.70px;top:230.00px;width:1.2px;height:1.2px;background:#222"></div>
<div class="a" style="left:160.70px;top:230.00px;width:1.2px;height:1.2px;background:#222"></div>
<div class="a" style="left:0;top:234.60px;width:166px;height:13.8px;background:#fff;border-bottom:1px solid #ececec"></div>
<div class="a" style="left:82.90px;top:234.60px;width:1px;height:13.8px;background:#ececec"></div>
<div class="a" style="left:1px;top:234.60px;width:81.40px;height:13.8px;overflow:hidden"><div class="t" style="left:0;top:3.2px;font-size:10.3px;color:#4a3f4a;letter-spacing:-0.05px">Properties expres</div></div>
<div class="t" style="left:84.90px;top:237.80px;font-size:10.3px;color:#4a3a52;letter-spacing:-0.1px">No propertie...</div>
<div class="a" style="left:154.20px;top:236.00px;width:10.5px;height:11px;background:linear-gradient(#f4f4f3,#d9d8d5);border:1px solid #a8a6a2;border-radius:2px"></div>
<div class="a" style="left:156.70px;top:243.80px;width:1.2px;height:1.2px;background:#222"></div>
<div class="a" style="left:158.70px;top:243.80px;width:1.2px;height:1.2px;background:#222"></div>
<div class="a" style="left:160.70px;top:243.80px;width:1.2px;height:1.2px;background:#222"></div>
<div class="a" style="left:0;top:248.40px;width:166px;height:13.8px;background:#efeeed"></div>
<svg style="left:1.5px;top:251.90px" width="8" height="8"><path d="M0.8 1.2 H7.2 L4 5.8Z" fill="none" stroke="#555" stroke-width="0.9"/></svg>
<div class="t" style="left:9px;top:251.60px;font-size:10.3px;color:#4a3f4a;letter-spacing:0.12px">Static text properties</div>
<div class="a" style="left:0;top:262.20px;width:166px;height:13.8px;background:#fff;border-bottom:1px solid #ececec"></div>
<div class="a" style="left:82.90px;top:262.20px;width:1px;height:13.8px;background:#ececec"></div>
<div class="a" style="left:1px;top:262.20px;width:81.40px;height:13.8px;overflow:hidden"><div class="t" style="left:0;top:3.2px;font-size:10.3px;color:#4a3f4a;letter-spacing:-0.05px">Text</div></div>
<div class="t" style="left:84.90px;top:265.40px;font-size:10.3px;color:#4a3a52;letter-spacing:-0.1px">Number of U...</div>
<div class="a" style="left:154.20px;top:263.60px;width:10.5px;height:11px;background:linear-gradient(#f4f4f3,#d9d8d5);border:1px solid #a8a6a2;border-radius:2px"></div>
<div class="a" style="left:156.70px;top:271.40px;width:1.2px;height:1.2px;background:#222"></div>
<div class="a" style="left:158.70px;top:271.40px;width:1.2px;height:1.2px;background:#222"></div>
<div class="a" style="left:160.70px;top:271.40px;width:1.2px;height:1.2px;background:#222"></div>
<div class="a" style="left:0;top:276.00px;width:166px;height:13.8px;background:#efeeed"></div>
<svg style="left:1.5px;top:279.50px" width="8" height="8"><path d="M0.8 1.2 H7.2 L4 5.8Z" fill="none" stroke="#555" stroke-width="0.9"/></svg>
<div class="t" style="left:9px;top:279.20px;font-size:10.3px;color:#4a3f4a;letter-spacing:0.12px">Text properties</div>
</div>
<div class="a" style="left:626px;top:83.5px;width:9.5px;height:295.5px;background:#e9e8e6;"></div>
<svg style="left:626px;top:83px" width="10" height="300"><path d="M2.7 6.5 L4.7 4.3 L6.7 6.5Z" fill="#444"/><rect x="1" y="8.5" width="7.6" height="133" rx="3.8" fill="#f7f7f6" stroke="#bdbbb7" stroke-width="0.8"/><g fill="#b0aeaa"><rect x="4" y="71" width="2" height="1"/><rect x="4" y="74" width="2" height="1"/><rect x="4" y="77" width="2" height="1"/></g><path d="M2.7 290 L4.7 292.2 L6.7 290Z" fill="#444"/></svg>
<div class="a" style="left:459px;top:378.5px;width:177px;height:1px;background:#c9c7c3;"></div>
<div class="t" style="left:460.5px;top:386px;font-size:10.4px;color:#4a4a4a;font-weight:bold;letter-spacing:0.45px;">Number of Users by Group</div>
<svg style="left:620px;top:384px" width="14" height="14"><circle cx="6" cy="6.5" r="5.5" fill="#8f8f8f"/><text x="6" y="9.5" font-size="8" font-weight="bold" fill="#d0d0d0" text-anchor="middle" font-family="Liberation Sans">?</text></svg>
<div class="a" style="left:610px;top:399.5px;width:25px;height:1px;background:#dcdad6;"></div>
<div class="a" style="left:1px;top:454.2px;width:457px;height:1px;background:#bdbbb7;"></div>
<svg style="left:21px;top:458px" width="12" height="12"><circle cx="6" cy="6" r="4.9" fill="#e46a4f"/><circle cx="6" cy="6" r="4.9" fill="none" stroke="#d65a40" stroke-width="0.6"/><rect x="5.2" y="2.7" width="1.6" height="4.5" fill="#fff"/><rect x="5.2" y="8" width="1.6" height="1.5" fill="#fff"/></svg>
<div class="t" style="left:34px;top:459.5px;font-size:10.3px;color:#454545;font-weight:normal;letter-spacing:-0.12px;">Report Problems Window</div>
<div class="t" style="left:161.7px;top:459.5px;font-size:10.3px;color:#454545;font-weight:normal;letter-spacing:-0.05px;">iReport output</div>
<div class="a" style="left:1px;top:473px;width:637px;height:1px;background:#dedcd8;"></div>
<div class="a" style="left:639px;top:36px;width:1px;height:458px;background:#a9a7a3;"></div>
<div class="a" style="left:0px;top:493px;width:640px;height:1px;background:#a9a7a3;"></div>
</body></html>
